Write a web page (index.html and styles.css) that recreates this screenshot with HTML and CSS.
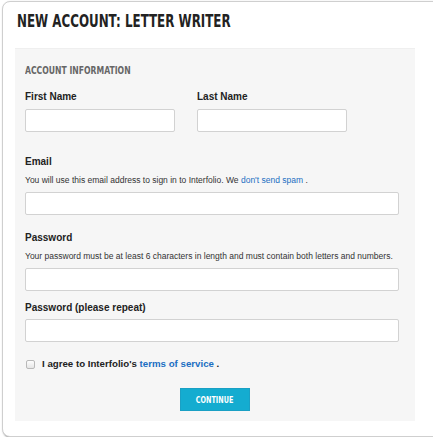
FILE: index.html
```html
<!DOCTYPE html>
<html>
<head>
<meta charset="utf-8">
<link rel="stylesheet" href="styles.css">
</head>
<body>
<div class="card">
  <h1 class="title"><span class="cond">NEW ACCOUNT: LETTER WRITER</span></h1>
  <div class="panel">
    <h2 class="section"><span class="cond">ACCOUNT INFORMATION</span></h2>
    <div class="row">
      <div class="col">
        <div class="label">First Name</div>
        <div class="input half"></div>
      </div>
      <div class="col">
        <div class="label">Last Name</div>
        <div class="input half"></div>
      </div>
    </div>
    <div class="field email">
      <div class="label">Email</div>
      <div class="help">You will use this email address to sign in to Interfolio. We <a class="link">don't send spam</a> .</div>
      <div class="input full"></div>
    </div>
    <div class="field pw">
      <div class="label">Password</div>
      <div class="help">Your password must be at least 6 characters in length and must contain both letters and numbers.</div>
      <div class="input full"></div>
    </div>
    <div class="field pw2">
      <div class="label">Password (please repeat)</div>
      <div class="input full"></div>
    </div>
    <div class="agree">
      <span class="check"></span>
      <span class="agree-text">I agree to Interfolio's <a class="link">terms of service</a> .</span>
    </div>
    <div class="actions">
      <div class="btn"><span class="cond">CONTINUE</span></div>
    </div>
  </div>
</div>
</body>
</html>
```
FILE: styles.css
```css
html, body {
  margin: 0;
  padding: 0;
  background: #ffffff;
}
body {
  font-family: "Liberation Sans", Arial, sans-serif;
  color: #222;
}
.card {
  margin: 1px 0 0 2px;
  width: 427px;
  height: 434px;
  border: 1px solid #cfcfcf;
  border-radius: 8px;
  box-shadow: 1px 1px 2px rgba(0,0,0,0.45);
  background: #fff;
  padding: 0 0 0 12px;
  box-sizing: content-box;
}
.cond {
  display: inline-block;
  transform-origin: left center;
  white-space: nowrap;
}
.title {
  margin: 0;
  padding: 9px 0 0 2px;
  height: 46px;
  box-sizing: border-box;
  font-family: "DejaVu Sans", sans-serif;
  font-weight: bold;
  font-size: 18px;
  line-height: 20px;
  color: #222;
}
.title .cond { transform: scaleX(0.66); }
.panel {
  width: 400px;
  box-sizing: border-box;
  background: #f6f6f6;
  border-top: 1px solid #efefef;
  padding: 15px 16px 10px 10px;
}
.section {
  margin: 0;
  font-family: "DejaVu Sans", sans-serif;
  font-weight: bold;
  font-size: 11px;
  line-height: 14px;
  color: #666;
}
.section .cond { transform: scaleX(0.70); }
.row {
  display: flex;
  gap: 22px;
  margin-top: 13px;
}
.label {
  font-weight: bold;
  font-size: 10px;
  line-height: 12px;
  color: #222;
  margin-bottom: 6px;
}
.input {
  height: 23px;
  box-sizing: border-box;
  background: #fff;
  border: 1px solid #d2d2d2;
  border-radius: 2px;
}
.half { width: 150px; }
.full { width: 374px; }
.field .label { margin-bottom: 7px; }
.help {
  font-size: 8.5px;
  line-height: 10px;
  color: #333;
  margin-bottom: 7px;
}
.email { margin-top: 24px; }
.pw { margin-top: 17px; }
.pw2 { margin-top: 11px; }
.pw2 .label { margin-bottom: 5px; }
.link { color: #1b6ec2; text-decoration: none; }
.agree {
  display: flex;
  align-items: center;
  margin-top: 15px;
  height: 14px;
  padding-left: 1px;
}
.check {
  width: 7px;
  height: 7px;
  border: 1px solid #b9b9b9;
  border-radius: 2px;
  background: linear-gradient(#fdfdfd, #e6e6e6);
  margin-right: 7px;
}
.agree-text {
  font-weight: bold;
  font-size: 9.7px;
  line-height: 14px;
  color: #222;
}
.actions {
  display: flex;
  justify-content: center;
  margin-top: 17px;
  padding-left: 6px;
}
.btn {
  width: 70px;
  height: 23px;
  box-sizing: border-box;
  background: #14acd0;
  border: 1px solid #1aa0c4;
  color: #fff;
  font-family: "DejaVu Sans", sans-serif;
  font-weight: bold;
  font-size: 9.5px;
  line-height: 21px;
  text-align: center;
}
.btn .cond {
  transform: scaleX(0.68);
  transform-origin: center center;
}
```
